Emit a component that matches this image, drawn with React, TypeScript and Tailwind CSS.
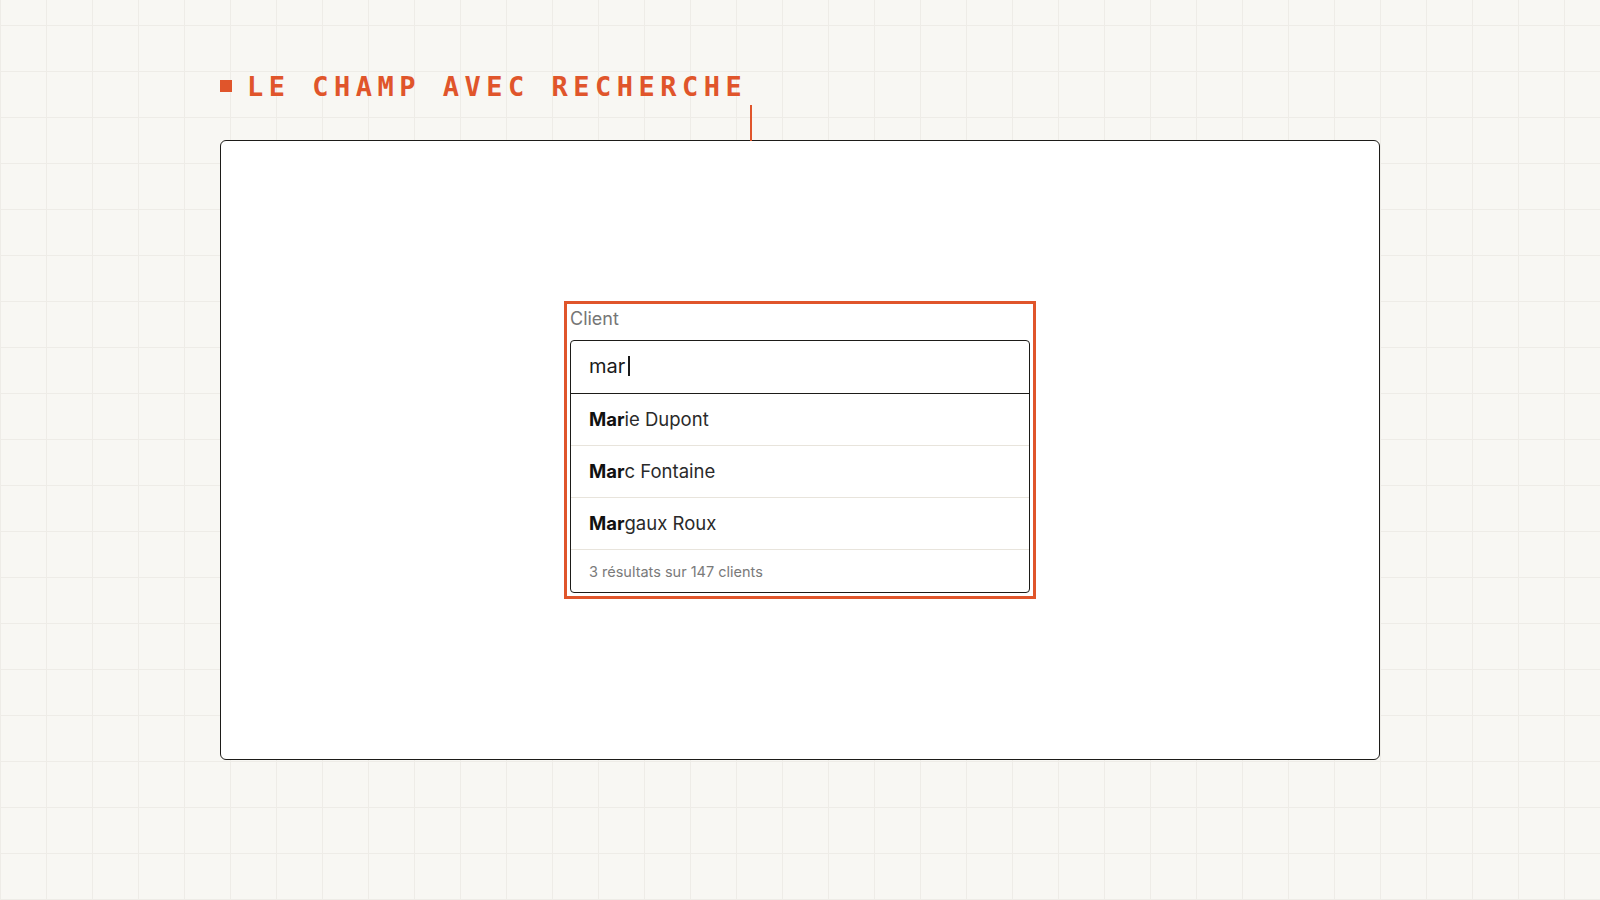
export default function App() {
  return (
    <div className="min-h-screen w-full bg-[#f8f7f3] bg-[linear-gradient(to_right,#eeece7_1px,transparent_1px),linear-gradient(to_bottom,#eeece7_1px,transparent_1px)] bg-[size:46px_46px] bg-[position:0_25px] font-['Inter','Liberation_Sans',sans-serif]">
      <div className="mx-auto w-[1160px] pt-[72px]">
        <div className="flex h-[28px] items-center gap-[15px]">
          <span className="h-[12px] w-[12px] bg-[#e0552b]" />
          <h1 className="font-['DejaVu_Sans_Mono','Liberation_Mono',monospace] text-[27px] leading-none font-bold tracking-[5.5px] text-[#e0552b]">
            LE CHAMP AVEC RECHERCHE
          </h1>
        </div>

        <div className="relative mt-[40px] flex h-[620px] items-center justify-center rounded-[6px] border-[1.5px] border-[#1d1b18] bg-white">
          <span className="absolute bottom-full left-[529px] h-[36px] w-[2px] bg-[#e0552b]" />
          <SearchField />
        </div>
      </div>
    </div>
  );
}

const results = [
  { match: "Mar", rest: "ie Dupont" },
  { match: "Mar", rest: "c Fontaine" },
  { match: "Mar", rest: "gaux Roux" },
];

function SearchField() {
  return (
    <div className="w-[460px] outline-3 outline-[#e0552b] outline-offset-3">
      <label className="mb-[9px] block text-[18px] leading-[23.5px] text-[#767676]">
        Client
      </label>
      <div className="overflow-hidden rounded-[4px] border-[1.5px] border-[#1d1b18] bg-white">
        <div className="flex h-[53px] items-center border-b border-[#1d1b18] px-[18px] pb-[2px] text-[20px] text-[#1a1a1a]">
          <span>mar</span>
          <span className="ml-[3px] h-[20px] w-[2px] bg-[#1a1a1a]" />
        </div>
        {results.map((r) => (
          <div
            key={r.rest}
            className="flex h-[52px] items-center border-b border-[#e8e4dc] px-[18px] pt-[2px] text-[18.5px] text-[#2a2a2a]"
          >
            <span>
              <strong className="font-bold text-[#111]">{r.match}</strong>
              {r.rest}
            </span>
          </div>
        ))}
        <div className="flex h-[42px] items-center px-[18px] pt-[2px] text-[14.5px] text-[#7a7a7a]">
          3 résultats sur 147 clients
        </div>
      </div>
    </div>
  );
}
